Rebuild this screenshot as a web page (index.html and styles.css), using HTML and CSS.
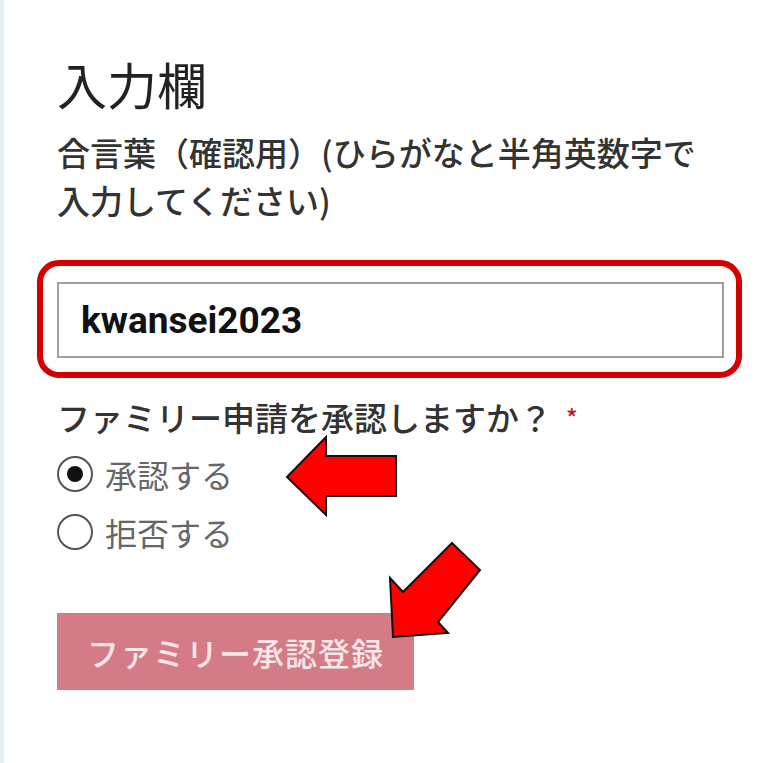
FILE: index.html
```html
<!DOCTYPE html>
<html lang="ja">
<head>
    <meta charset="UTF-8">
    <meta name="viewport" content="width=device-width, initial-scale=1.0">
    <title>入力欄</title>
    <link rel="stylesheet" href="styles.css">
</head>
<body>
    <div class="page">
        <h1 class="title">入力欄</h1>
        <p class="note">合言葉（確認用）(ひらがなと半角英数字で<br>入力してください)</p>

        <div class="highlight">
            <input type="text" class="text-input" value="kwansei2023">
        </div>

        <div class="question">ファミリー申請を承認しますか？<span class="required">*</span></div>

        <label class="radio-row">
            <span class="radio checked"></span>
            <span class="radio-text">承認する</span>
        </label>
        <label class="radio-row">
            <span class="radio"></span>
            <span class="radio-text">拒否する</span>
        </label>

        <button class="submit">ファミリー承認登録</button>

        <svg class="arrows" width="768" height="763" viewBox="0 0 768 763">
            <polygon points="287,477 326,437 326,456 396,456 396,496 326,496 326,515" />
            <polygon points="452,543 480,570 438,622 448,633 393,637 390,578 403,592" />
        </svg>
    </div>
</body>
</html>
```

FILE: styles.css
```css
body {
    margin: 0;
    background: #fff;
    font-family: "Noto Sans CJK JP", "Noto Sans", sans-serif;
}
.page {
    position: relative;
    min-height: 763px;
    box-sizing: border-box;
    border-left: 4px solid #e6edf5;
    padding: 59px 44px 0 53px;
}
.title {
    margin: 0;
    font-size: 50px;
    line-height: 48px;
    font-weight: 400;
    color: #222;
}
.note {
    margin: 21px 0 0;
    font-size: 33px;
    line-height: 48px;
    font-weight: 500;
    color: #333;
}
.highlight {
    margin: 36px -18px 0 -20px;
    border: 6px solid #d40000;
    border-radius: 22px;
    padding: 16px 12px 14px 14px;
}
.text-input {
    display: block;
    width: 100%;
    box-sizing: border-box;
    height: 76px;
    border: 2px solid #a0a0a0;
    padding: 0 22px;
    font-family: Roboto, "Liberation Sans", sans-serif;
    font-size: 37px;
    font-weight: 700;
    color: #111;
    outline: none;
}
.question {
    margin-top: 17px;
    font-size: 33px;
    line-height: 44px;
    font-weight: 500;
    color: #333;
}
.required {
    color: #b3262e;
    font-size: 24px;
    margin-left: 14px;
    vertical-align: top;
}
.radio-row {
    display: flex;
    align-items: center;
    gap: 12px;
    height: 58px;
}
.radio-row:first-of-type {
    margin-top: 6px;
}
.radio {
    width: 36px;
    height: 36px;
    box-sizing: border-box;
    border: 2.5px solid #555;
    border-radius: 50%;
    display: flex;
    align-items: center;
    justify-content: center;
}
.radio.checked::after {
    content: "";
    width: 16px;
    height: 16px;
    border-radius: 50%;
    background: #111;
}
.radio-text {
    font-size: 32px;
    color: #666;
}
.submit {
    display: block;
    margin-top: 52px;
    width: 357px;
    height: 77px;
    border: none;
    background: #d47b86;
    color: #f8e6e8;
    font-family: "Noto Sans CJK JP", sans-serif;
    font-size: 32px;
    font-weight: 500;
    letter-spacing: 1px;
}
.arrows {
    position: absolute;
    top: 0;
    left: -4px;
    pointer-events: none;
}
.arrows polygon {
    fill: #ff0000;
    stroke: #111;
    stroke-width: 2;
    stroke-linejoin: miter;
}
```
